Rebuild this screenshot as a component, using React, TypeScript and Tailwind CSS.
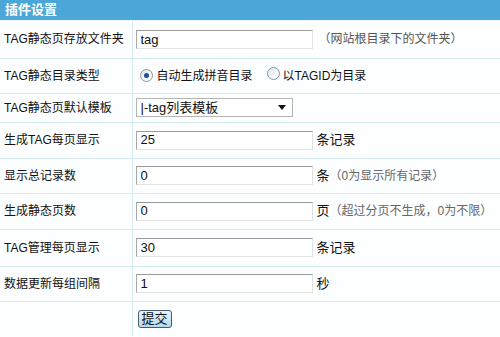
const font = "font-['Tahoma','Liberation_Sans','Noto_Sans_CJK_SC',sans-serif]";

type Row = {
  label: string;
  value: string;
  unit?: string;
  hint?: string;
  h: string;
};

const rows: Row[] = [
  { label: "生成TAG每页显示", value: "25", unit: "条记录", h: "h-[36px]" },
  { label: "显示总记录数", value: "0", unit: "条", hint: "（0为显示所有记录）", h: "h-[35px]" },
  { label: "生成静态页数", value: "0", unit: "页", hint: "（超过分页不生成，0为不限）", h: "h-[36px]" },
  { label: "TAG管理每页显示", value: "30", unit: "条记录", h: "h-[37px]" },
  { label: "数据更新每组间隔", value: "1", unit: "秒", h: "h-[35px]" },
];

function TextBox({ value }: { value: string }) {
  return (
    <input
      readOnly
      value={value}
      className="h-[19px] w-[177px] border border-t-[#9a9a9a] border-l-[#a8a8a8] border-r-[#e2e2e2] border-b-[#e2e2e2] bg-white px-[4px] text-[13px] text-[#111] outline-none"
    />
  );
}

function Radio({ checked }: { checked?: boolean }) {
  return (
    <span className="inline-flex h-[13px] w-[13px] items-center justify-center rounded-full border border-[#8a9aa8] bg-gradient-to-br from-[#e4e8ec] to-white">
      {checked && <span className="h-[5px] w-[5px] rounded-full bg-[#1f4f8c]" />}
    </span>
  );
}

export default function App() {
  return (
    <div className={`${font} h-[337px] w-[500px] overflow-hidden bg-[#fcfeff] text-[12px] text-[#111]`}>
      <div className="flex h-[21px] items-center border-b border-[#e9f4fa] bg-[#4aa7d7] pl-[5px] text-[13px] font-bold text-white">
        插件设置
      </div>
      <table className="w-full border-collapse">
        <tbody>
          <tr className="h-[37px] border-b border-[#d6eaf4]">
            <td className="w-[132px] border-r border-[#d6eaf4] pl-[4px]">TAG静态页存放文件夹</td>
            <td className="pl-[3px]">
              <div className="flex items-center">
                <TextBox value="tag" />
                <span className="ml-[6px] text-[#555]">（网站根目录下的文件夹）</span>
              </div>
            </td>
          </tr>
          <tr className="h-[35px] border-b border-[#d6eaf4]">
            <td className="border-r border-[#d6eaf4] pl-[4px]">TAG静态目录类型</td>
            <td className="pl-[7px]">
              <div className="flex items-center">
                <Radio checked />
                <span className="ml-[4px]">自动生成拼音目录</span>
                <span className="ml-[14px]">
                  <Radio />
                </span>
                <span className="ml-[3px]">以TAGID为目录</span>
              </div>
            </td>
          </tr>
          <tr className="h-[29px] border-b border-[#d6eaf4]">
            <td className="border-r border-[#d6eaf4] pl-[4px]">TAG静态页默认模板</td>
            <td className="pl-[3px]">
              <div className="flex h-[19px] w-[157px] items-center justify-between border border-[#b5b5b5] bg-white pl-[4px] pr-[6px] text-[13px]">
                <span>|-tag列表模板</span>
                <svg width="8" height="5" viewBox="0 0 8 5">
                  <path d="M0 0h8L4 5z" fill="#111" />
                </svg>
              </div>
            </td>
          </tr>
          {rows.map((r) => (
            <tr key={r.label} className={`${r.h} border-b border-[#d6eaf4]`}>
              <td className="border-r border-[#d6eaf4] pl-[4px]">{r.label}</td>
              <td className="pl-[3px]">
                <div className="flex items-center">
                  <TextBox value={r.value} />
                  <span className="ml-[4px] text-[13px]">{r.unit}</span>
                  {r.hint && <span className="text-[#666]">{r.hint}</span>}
                </div>
              </td>
            </tr>
          ))}
          <tr className="h-[35px]">
            <td className="border-r border-[#d6eaf4]" />
            <td className="pl-[5px] align-top pt-[8px]">
              <button className="h-[18px] rounded-[3px] border border-[#3e5e74] bg-gradient-to-b from-[#e8f4fb] to-[#b7d8ec] px-[3px] text-[13px] leading-[14px] text-[#111]">
                提交
              </button>
            </td>
          </tr>
        </tbody>
      </table>
    </div>
  );
}
